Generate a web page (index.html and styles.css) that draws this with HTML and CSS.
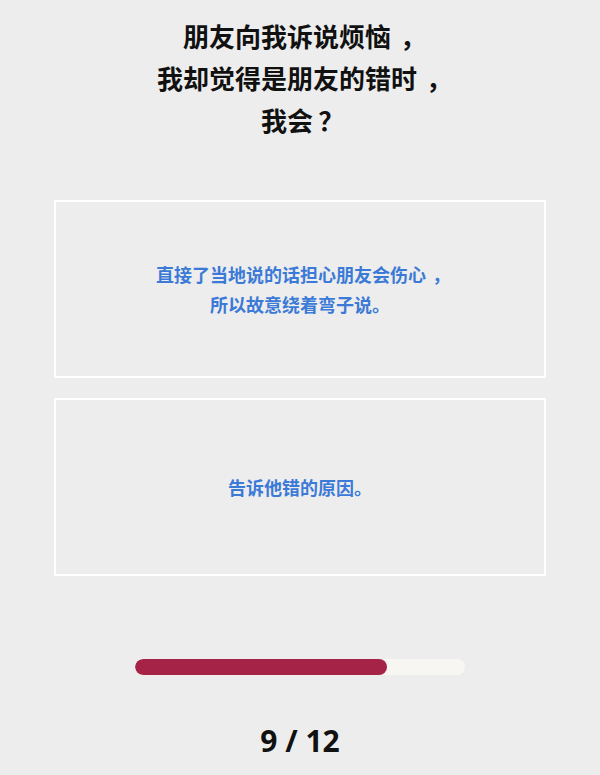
FILE: index.html
```html
<!DOCTYPE html>
<html lang="zh">
<head>
<meta charset="utf-8"/>
<title>测试</title>
<link rel="stylesheet" href="styles.css">
</head>
<body>
<div id="quiz">
	<h1 class="question">朋友向我诉说烦恼<span class="comma">，</span><br>我却觉得是朋友的错时<span class="comma">，</span><br>我会<span class="qmark">？</span></h1>
	<ul class="answers">
		<li class="answer"><p>直接了当地说的话担心朋友会伤心<span class="comma">，</span><br>所以故意绕着弯子说。</p></li>
		<li class="answer"><p>告诉他错的原因。</p></li>
	</ul>
	<div class="progress"><div class="bar" style="width:76.5%"></div></div>
	<div class="count">9 / 12</div>
</div>
</body>
</html>
```
FILE: styles.css
```css
html,body{margin:0;padding:0;background-color:#ededed;}
body{font-family:"Noto Sans","Noto Sans CJK SC",sans-serif;color:#111;}
#quiz{width:600px;height:775px;box-sizing:border-box;padding-top:15px;}
.question{margin:0;font-family:"Noto Sans CJK SC",sans-serif;font-size:26px;line-height:42px;font-weight:700;text-align:center;}
.comma{display:inline-block;width:1em;text-indent:.35em;}
.qmark{display:inline-block;width:1em;text-indent:.2em;}
.answers{list-style:none;margin:59px 54px 0;padding:0;display:flex;flex-direction:column;gap:20px;}
.answer{height:178px;box-sizing:border-box;border:2px solid #fff;display:flex;align-items:center;justify-content:center;text-align:center;font-family:"Noto Sans CJK SC",sans-serif;font-size:18px;line-height:30px;font-weight:700;color:#3b7ad6;}
.answer p{margin:0;}
.progress{width:330px;height:16px;margin:83px auto 0;background-color:#f8f6f2;border-radius:8px;overflow:hidden;}
.progress .bar{height:100%;background-color:#a52346;border-radius:8px;}
.count{margin-top:48px;text-align:center;font-size:30px;font-weight:700;line-height:36px;}
```
